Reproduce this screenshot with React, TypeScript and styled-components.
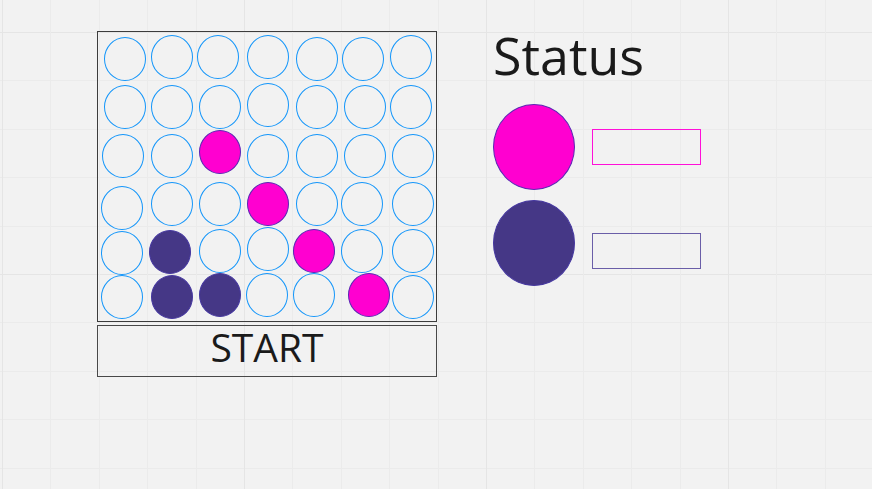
import React from "react";
import styled, { createGlobalStyle } from "styled-components";

type Owner = "empty" | "pink" | "purple";

interface Piece {
  x: number;
  y: number;
  owner?: Owner;
}

const discColors: Record<Owner, { fill: string; line: string }> = {
  empty: { fill: "transparent", line: "#1496fa" },
  pink: { fill: "#ff00d0", line: "#5a28b4" },
  purple: { fill: "#453786", line: "#4638a0" },
};

// Pieces lie freely on the board; x and y are measured from its inner corner.
const pieces: Piece[] = [
  { x: 6, y: 5 },
  { x: 53, y: 3 },
  { x: 99, y: 3 },
  { x: 149, y: 3 },
  { x: 198, y: 5 },
  { x: 244, y: 5 },
  { x: 292, y: 3 },

  { x: 6, y: 53 },
  { x: 53, y: 53 },
  { x: 101, y: 53 },
  { x: 149, y: 51 },
  { x: 198, y: 53 },
  { x: 246, y: 53 },
  { x: 292, y: 53 },

  { x: 4, y: 102 },
  { x: 53, y: 102 },
  { x: 101, y: 98, owner: "pink" },
  { x: 149, y: 102 },
  { x: 198, y: 102 },
  { x: 246, y: 102 },
  { x: 294, y: 102 },

  { x: 3, y: 154 },
  { x: 53, y: 150 },
  { x: 101, y: 150 },
  { x: 149, y: 150, owner: "pink" },
  { x: 198, y: 150 },
  { x: 243, y: 150 },
  { x: 294, y: 150 },

  { x: 3, y: 199 },
  { x: 51, y: 198, owner: "purple" },
  { x: 101, y: 197 },
  { x: 149, y: 195 },
  { x: 195, y: 197, owner: "pink" },
  { x: 243, y: 197 },
  { x: 294, y: 197 },

  { x: 3, y: 243 },
  { x: 53, y: 243, owner: "purple" },
  { x: 101, y: 241, owner: "purple" },
  { x: 148, y: 241 },
  { x: 195, y: 241 },
  { x: 250, y: 241, owner: "pink" },
  { x: 294, y: 243 },
];

const gridStops = `
  #e5e5e5 0 1px, transparent 1px 48px,
  #ebebeb 48px 49px, transparent 49px 97px,
  #ebebeb 97px 98px, transparent 98px 145px,
  #ebebeb 145px 146px, transparent 146px 194px,
  #ebebeb 194px 195px, transparent 195px
`;

const GlobalStyle = createGlobalStyle`
  *, *::before, *::after {
    box-sizing: border-box;
  }

  body {
    margin: 0;
    color: #1a1a1a;
    font-family: "Open Sans", "Noto Sans", sans-serif;
    background-color: #f2f2f2;
    background-image:
      linear-gradient(to right, ${gridStops}),
      linear-gradient(to bottom, ${gridStops});
    background-size: 242px 242px;
    background-position: 2px 32px;
  }
`;

const Page = styled.main`
  display: flex;
  flex-wrap: wrap;
  align-items: flex-start;
  gap: 32px 56px;
  padding: 31px 24px 32px 97px;
`;

const Game = styled.section`
  display: flex;
  flex-direction: column;
  gap: 3px;
`;

const Board = styled.div`
  position: relative;
  width: 340px;
  height: 291px;
  border: 1px solid #3c3c3c;
`;

const Disc = styled.span<{ $owner: Owner }>`
  display: block;
  border: 1px solid ${({ $owner }) => discColors[$owner].line};
  border-radius: 50%;
  background: ${({ $owner }) => discColors[$owner].fill};
`;

const BoardPiece = styled(Disc)<{ $x: number; $y: number }>`
  position: absolute;
  left: ${({ $x }) => $x}px;
  top: ${({ $y }) => $y}px;
  width: 42px;
  height: 44px;
`;

const StartButton = styled.button`
  padding: 0 0 8px;
  border: 1px solid #484848;
  background: transparent;
  color: inherit;
  font-family: inherit;
  font-size: 39px;
  line-height: 42px;
  cursor: pointer;
`;

const Status = styled.section`
  display: flex;
  flex-direction: column;
  gap: 25px;
`;

const Heading = styled.h1`
  margin: 0;
  font-size: 52px;
  font-weight: 400;
  line-height: 48px;
`;

const Players = styled.div`
  display: flex;
  gap: 17px;
`;

const Tokens = styled.div`
  display: flex;
  flex-direction: column;
  gap: 10px;
`;

const PlayerToken = styled(Disc)`
  width: 82px;
  height: 86px;
`;

const Fields = styled.div`
  display: flex;
  flex-direction: column;
  gap: 68px;
  padding-top: 25px;
`;

const PlayerField = styled.input<{ $line: string }>`
  width: 109px;
  height: 36px;
  padding: 0 8px;
  border: 1px solid ${({ $line }) => $line};
  border-radius: 0;
  background: transparent;
  color: inherit;
  font-family: inherit;
  font-size: 16px;
`;

export default function App() {
  return (
    <>
      <GlobalStyle />
      <Page>
        <Game>
          <Board role="img" aria-label="Game board">
            {pieces.map(({ x, y, owner = "empty" }) => (
              <BoardPiece key={`${x}-${y}`} $x={x} $y={y} $owner={owner} />
            ))}
          </Board>
          <StartButton type="button">START</StartButton>
        </Game>
        <Status>
          <Heading>Status</Heading>
          <Players>
            <Tokens>
              <PlayerToken $owner="pink" />
              <PlayerToken $owner="purple" />
            </Tokens>
            <Fields>
              <PlayerField type="text" aria-label="Pink player" $line="#ff10d8" />
              <PlayerField type="text" aria-label="Purple player" $line="#6a5ea8" />
            </Fields>
          </Players>
        </Status>
      </Page>
    </>
  );
}
